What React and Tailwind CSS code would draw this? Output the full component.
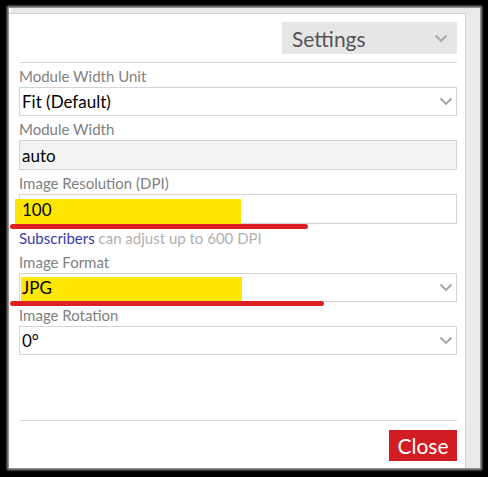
import React from "react";

function Chevron({ className = "" }) {
  return (
    <svg width="14" height="9" viewBox="0 0 14 9" className={className}>
      <path d="M1.5 1.5 L7 7 L12.5 1.5" fill="none" stroke="#a3a3a3" strokeWidth="1.8" />
    </svg>
  );
}

function Label({ children }) {
  return (
    <div className="h-[24px] leading-[26px] text-[15px] text-[#808080]">{children}</div>
  );
}

function Select({ value }) {
  return (
    <div className="relative h-[29px] border border-[#d4d4d4] bg-white flex items-center justify-between pr-[3px]">
      <span className="pl-[2px] text-[17px] text-black leading-none">{value}</span>
      <Chevron />
    </div>
  );
}

export default function App() {
  return (
    <div
      className="w-[488px] h-[477px] bg-black pt-[8px] pl-[9px] pr-[8px] pb-[9px]"
      style={{ fontFamily: "Lato, 'Open Sans', sans-serif" }}
    >
      <div className="w-full h-full bg-white flex flex-col shadow-[0_0_2px_2px_#9a9a9a]">
        <div className="h-[5px] bg-[#e9e9e9] ml-[2px]" />
        <div className="flex-1 flex">
          <div className="flex-1 border-t border-r border-[#d0d0d0] pl-[10px] pr-[8px] flex flex-col">
            <div className="flex justify-end pt-[8px]">
              <div className="w-[175px] h-[32px] bg-[#e6e6e6] flex items-center justify-between pl-[10px] pr-[9px]">
                <span className="text-[21px] text-[#555] leading-none">Settings</span>
                <Chevron />
              </div>
            </div>
            <div className="mt-[8px] border-t border-[#d6d6d6]" />
            <Label>Module Width Unit</Label>
            <Select value="Fit (Default)" />
            <Label>Module Width</Label>
            <div className="h-[30px] border border-[#d4d4d4] bg-[#f3f3f3] flex items-center">
              <span className="pl-[2px] text-[17px] text-black leading-none">auto</span>
            </div>
            <Label>Image Resolution (DPI)</Label>
            <div className="relative h-[30px] border border-[#d4d4d4] bg-white flex items-center">
              <div className="absolute left-[-5px] top-[4px] w-[226px] h-[25px] bg-[#ffe600]" />
              <span className="relative pl-[2px] text-[17px] text-black leading-none">100</span>
              <div className="absolute left-[-10px] top-[29px] w-[298px] h-[5px] rounded-full bg-[#e02020]" />
            </div>
            <div className="h-[24px] leading-[26px] text-[15px] mt-[1px]">
              <span className="text-[#3a3aaa]">Subscribers</span>{" "}
              <span className="text-[#b0b0b0]">can adjust up to 600 DPI</span>
            </div>
            <Label>Image Format</Label>
            <div className="relative h-[29px] border border-[#d4d4d4] bg-white flex items-center justify-between pr-[3px]">
              <div className="absolute left-[1px] top-[3px] w-[221px] h-[25px] bg-[#ffe600]" />
              <span className="relative pl-[2px] text-[17px] text-black leading-none">JPG</span>
              <Chevron />
              <div className="absolute left-[-10px] top-[27px] w-[314px] h-[5px] rounded-full bg-[#e02020]" />
            </div>
            <Label>Image Rotation</Label>
            <Select value="0°" />
            <div className="flex-1" />
            <div className="border-t border-[#d6d6d6]" />
            <div className="flex justify-end pt-[9px] pb-[7px]">
              <div className="w-[68px] h-[31px] bg-[#d01c22] flex items-center justify-center text-white text-[21px] leading-none">
                Close
              </div>
            </div>
          </div>
          <div className="w-[14px] bg-[#e9e9e9]" />
        </div>
      </div>
    </div>
  );
}
